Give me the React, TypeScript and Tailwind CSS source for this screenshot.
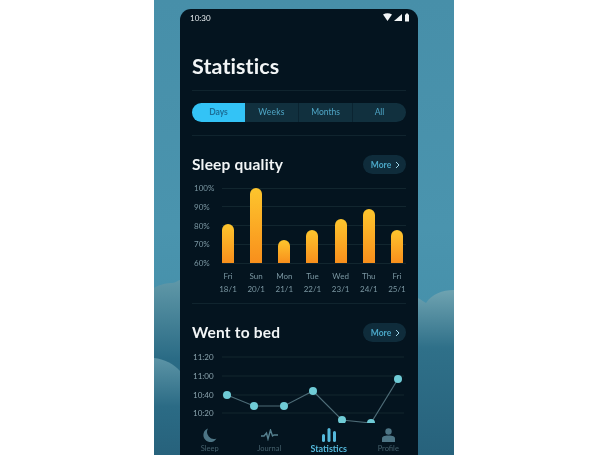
const font = { fontFamily: '"Lato", "Liberation Sans", sans-serif' };

const bars = [
  { day: 'Fri', date: '18/1', height: 39 },
  { day: 'Sun', date: '20/1', height: 75 },
  { day: 'Mon', date: '21/1', height: 23 },
  { day: 'Tue', date: '22/1', height: 33 },
  { day: 'Wed', date: '23/1', height: 44 },
  { day: 'Thu', date: '24/1', height: 54 },
  { day: 'Fri', date: '25/1', height: 33 },
];

// x, y inside the 214 wide line chart
const points = [
  [35, 50],
  [62, 61],
  [92, 61],
  [121, 46],
  [150, 75],
  [179, 78],
  [206, 34],
];

function MoreButton() {
  return (
    <div className="flex h-[19px] w-[43px] items-center justify-center gap-1 rounded-full bg-[#0f2c3b] pl-[2px] text-[8.5px] font-bold leading-none text-[#4aa6c6]">
      <span className="pt-[1px]">More</span>
      <svg width="5" height="8" viewBox="0 0 5 8" fill="none" stroke="#9fd4e6" strokeWidth="1">
        <path d="M1 1l3 3-3 3" />
      </svg>
    </div>
  );
}

function Heading({ title }: { title: string }) {
  return (
    <div className="flex h-[19px] items-center justify-between">
      <h2 className="text-[15.5px] font-bold tracking-[0.2px] text-[#f2f5f6]">{title}</h2>
      <MoreButton />
    </div>
  );
}

function SleepChart() {
  return (
    <div className="mt-[14px]">
      <div className="relative flex h-[75px]">
        <div className="absolute inset-y-0 left-0 right-0 flex flex-col justify-between">
          {['100%', '90%', '80%', '70%', '60%'].map((label) => (
            <div key={label} className="flex h-0 items-center">
              <span className="w-[30px] shrink-0 pl-[2px] text-[8px] text-[#7b97a2]">{label}</span>
              <div className="h-px flex-1 bg-[#12262f]" />
            </div>
          ))}
        </div>
        <div className="relative ml-[30px] flex flex-1 items-end justify-between pr-[3px]">
          {bars.map((bar, i) => (
            <div
              key={i}
              className="w-3 rounded-t-full bg-gradient-to-b from-[#fdc52d] to-[#f88f1c]"
              style={{ height: bar.height }}
            />
          ))}
        </div>
      </div>
      <div className="ml-[30px] mt-[7px] flex justify-between pr-[3px] text-[8px] leading-[12.5px] text-[#7b97a2]">
        {bars.map((bar, i) => (
          <div key={i} className="flex w-3 flex-col items-center">
            <span>{bar.day}</span>
            <span>{bar.date}</span>
          </div>
        ))}
      </div>
    </div>
  );
}

function BedChart() {
  return (
    <svg width="214" height="90" viewBox="0 0 214 90" className="mt-[3px] block">
      {[
        ['11:20', 15],
        ['11:00', 34],
        ['10:40', 53],
        ['10:20', 71],
      ].map(([label, y]) => (
        <g key={label}>
          <line x1="30" x2="212" y1={Number(y) - 3} y2={Number(y) - 3} stroke="#12262f" />
          <text x="1" y={y} fontSize="8" fill="#8aa3ad" style={font}>
            {label}
          </text>
        </g>
      ))}
      <polyline points={points.map((p) => p.join(',')).join(' ')} fill="none" stroke="#4d6b76" strokeWidth="1.2" />
      {points.map(([x, y]) => (
        <circle key={x} cx={x} cy={y} r="4" fill="#6fcbd6" />
      ))}
    </svg>
  );
}

function NavItem({ label, active, children }: { label: string; active?: boolean; children: React.ReactNode }) {
  return (
    <div className={`flex flex-col items-center gap-[1px] pt-[4px] ${active ? 'text-[9px] font-bold text-[#55b9dc]' : 'text-[7.5px] text-[#45606c]'}`}>
      <div className="flex h-[16px] items-center justify-center">{children}</div>
      <span className="leading-[10px]">{label}</span>
    </div>
  );
}

export default function App() {
  return (
    <div className="flex h-[455px] w-[600px] justify-center overflow-hidden bg-white blur-[0.4px]" style={font}>
      <div className="relative ml-[8px] h-full w-[300px] overflow-hidden bg-gradient-to-b from-[#478fa9] via-[#4a94ae] to-[#3f8ba5]">
        <svg width="300" height="175" viewBox="0 0 300 175" className="absolute bottom-0 left-0">
          <defs>
            <linearGradient id="cloudA" x1="0" y1="0" x2="0" y2="1">
              <stop offset="0" stopColor="#6098a8" />
              <stop offset="0.45" stopColor="#2a6b85" />
              <stop offset="1" stopColor="#27627c" />
            </linearGradient>
            <linearGradient id="cloudB" x1="0" y1="0" x2="0" y2="1">
              <stop offset="0" stopColor="#5c94a6" />
              <stop offset="0.5" stopColor="#2b6b85" />
              <stop offset="1" stopColor="#27627c" />
            </linearGradient>
            <linearGradient id="cloudC" x1="0" y1="0" x2="0" y2="1">
              <stop offset="0" stopColor="#6fa3b1" />
              <stop offset="0.35" stopColor="#2f7089" />
              <stop offset="1" stopColor="#27627c" />
            </linearGradient>
          </defs>
          <path d="M0 8C6 4 14 3 18 3C22 3 24 0 26 0V175H0Z" fill="url(#cloudA)" />
          <path d="M0 78C10 79 20 84 26 91V175H0Z" fill="url(#cloudB)" />
          <path d="M264 18C268 20 270 22 272 23C278 14 288 10 300 10V175H264Z" fill="url(#cloudC)" />
        </svg>
        <div className="relative ml-[26px] mt-[9px] flex h-[446px] w-[238px] flex-col overflow-hidden rounded-t-[11px] bg-[#04141f]">
          <div className="flex h-[16px] shrink-0 items-center justify-between pl-[10px] pr-[8px] pt-[1px] text-[8px] text-[#e6ecee]">
            <span>10:30</span>
            <svg width="27" height="9" viewBox="0 0 27 9" fill="#f2f5f6">
              <path d="M0 1.500C3 -.3 6 -.3 9 1.500L4.500 8Z" />
              <path d="M11 8L19 1V8Z" />
              <path d="M22 1.500h1V.5h2v1h1V8.500h-4Z" />
            </svg>
          </div>
          <div className="min-h-0 flex-1 overflow-hidden px-3">
            <h1 className="mt-[29px] text-[21.5px] font-bold leading-[25px] tracking-[0.1px] text-[#f2f5f6]">Statistics</h1>
            <div className="mt-[11px] h-px bg-[#10242e]" />
            <div className="mt-[12px] flex h-[19px] overflow-hidden rounded-full bg-[#11303e] text-[8.5px] text-[#4fa6c6]">
              <div className="flex w-[53px] items-center justify-center bg-[#33c3f6] font-bold text-[#1b6f98]">Days</div>
              <div className="flex w-[54px] items-center justify-center border-r border-[#0b2431] tracking-[0.2px]">Weeks</div>
              <div className="flex w-[54px] items-center justify-center border-r border-[#0b2431]">Months</div>
              <div className="flex flex-1 items-center justify-center">All</div>
            </div>
            <div className="mt-[13px] h-px bg-[#10242e]" />
            <div className="mt-[19px]">
              <Heading title="Sleep quality" />
            </div>
            <SleepChart />
            <div className="mt-[8px] h-px bg-[#10242e]" />
            <div className="mt-[19px]">
              <Heading title="Went to bed" />
            </div>
            <BedChart />
          </div>
          <nav className="grid h-[32px] shrink-0 grid-cols-4 bg-[#04141f]">
            <NavItem label="Sleep">
              <svg width="14" height="14" viewBox="0 0 14 14" fill="#4d7585">
                <path d="M5 .5A7 7 0 0 0 13.500 10.500 7 7 0 1 1 5 .5Z" />
              </svg>
            </NavItem>
            <NavItem label="Journal">
              <svg width="17" height="12" viewBox="0 0 17 12" fill="none" stroke="#55808f" strokeWidth="1.4">
                <path d="M0 7h3l2.500-3 1.500 6 2.500-9 2 6 1.500-1h4" />
              </svg>
            </NavItem>
            <NavItem label="Statistics" active>
              <svg width="14" height="14" viewBox="0 0 14 14" fill="#55b9dc">
                <rect x="0" y="6" width="3" height="8" rx="1.500" />
                <rect x="5.500" y="0" width="3" height="14" rx="1.500" />
                <rect x="11" y="3" width="3" height="11" rx="1.500" />
              </svg>
            </NavItem>
            <NavItem label="Profile">
              <svg width="13" height="14" viewBox="0 0 13 14" fill="#4d7585">
                <circle cx="6.500" cy="3.500" r="3.200" />
                <path d="M0 14V10.500C0 8.500 2 7.500 6.500 7.500S13 8.500 13 10.500V14Z" />
              </svg>
            </NavItem>
          </nav>
        </div>
      </div>
    </div>
  );
}
